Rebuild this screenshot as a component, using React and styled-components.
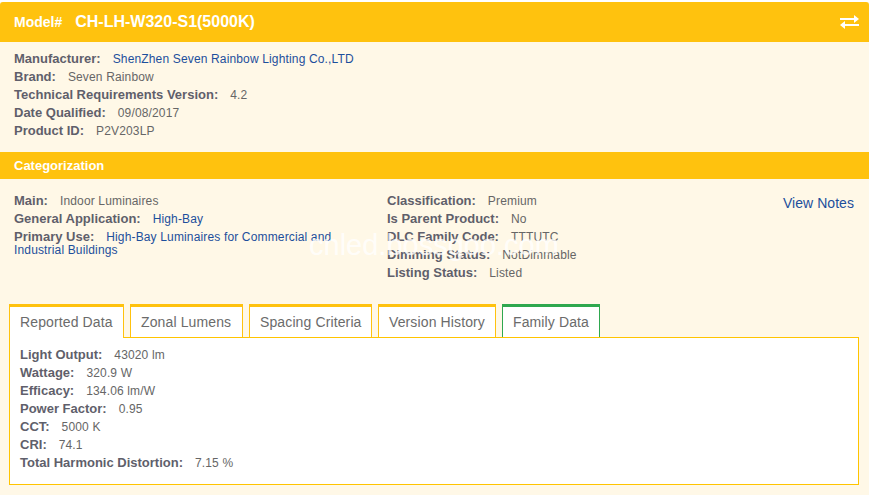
import React from "react";
import styled, { createGlobalStyle } from "styled-components";

const Global = createGlobalStyle`
  html, body { margin: 0; padding: 0; background: #fff; }
  body { font-family: "Liberation Sans", Arial, sans-serif; }
`;

const Page = styled.div`
  position: relative;
  width: 869px;
  height: 495px;
  padding-top: 2px;
  box-sizing: border-box;
  overflow: hidden;
  background: #fff;
`;

const Card = styled.div`
  height: 493px;
  background: #fff8e7;
  display: flex;
  flex-direction: column;
`;

const ModelBar = styled.div`
  height: 40px;
  flex: none;
  background: #ffc20e;
  border-radius: 3px 3px 0 0;
  display: flex;
  align-items: center;
  padding: 0 10px 0 14px;
  color: #fff;
  font-weight: bold;
`;

const ModelLabel = styled.span`
  font-size: 14px;
  margin-right: 13px;
`;

const ModelName = styled.span`
  font-size: 16px;
  flex: 1;
`;

const Info = styled.div`
  height: 110px;
  flex: none;
  box-sizing: border-box;
  padding: 8px 14px 0;
`;

const Row = styled.div`
  font-size: 12px;
  height: 18px;
  line-height: 18px;
  color: #666;
  letter-spacing: 0.15px;
`;

const Label = styled.b`
  font-size: 13px;
  line-height: 1;
  letter-spacing: 0;
  color: #5f5f6b;
  margin-right: 12px;
`;

const Value = styled.span`
  color: ${(p) => (p.$link ? "#1d4f9c" : "#666")};
`;

const SectionBar = styled.div`
  height: 27px;
  flex: none;
  box-sizing: border-box;
  background: #ffc20e;
  color: #fff;
  font-size: 13px;
  font-weight: bold;
  line-height: 27px;
  padding-left: 14px;
`;

const Cats = styled.div`
  height: 125px;
  flex: none;
  box-sizing: border-box;
  padding: 13px 15px 0 14px;
  display: grid;
  grid-template-columns: 373px 1fr auto;
`;

const WrapRow = styled(Row)`
  height: auto;
  line-height: 13px;
  padding-top: 2px;
  width: 330px;
`;

const ViewNotes = styled.a`
  font-size: 14px;
  line-height: 22px;
  letter-spacing: 0.05px;
  color: #1d4f9c;
`;

const Watermark = styled.div`
  position: absolute;
  left: 309px;
  top: 227px;
  font-size: 29px;
  line-height: 36px;
  color: rgba(255, 255, 255, 0.8);
  white-space: nowrap;
`;

const TabsWrap = styled.div`
  margin: 0 10px 0 9px;
`;

const TabList = styled.div`
  display: flex;
  gap: 6px;
  height: 33px;
`;

const Tab = styled.div`
  box-sizing: border-box;
  width: ${(p) => p.$w}px;
  height: ${(p) => (p.$active ? "34px" : "33px")};
  padding-left: 10px;
  background: #fff;
  border: 1px solid ${(p) => p.$color};
  border-top-width: 3px;
  border-bottom: none;
  font-size: 14px;
  line-height: 30px;
  letter-spacing: 0.12px;
  white-space: nowrap;
  color: #6b6b6b;
  position: ${(p) => (p.$active ? "relative" : "static")};
  z-index: ${(p) => (p.$active ? 1 : "auto")};
`;

const Panel = styled.div`
  box-sizing: border-box;
  height: 148px;
  background: #fff;
  border: 1px solid #ffc400;
  padding: 8px 10px;
`;

const fields1 = [
  ["Manufacturer:", "ShenZhen Seven Rainbow Lighting Co.,LTD", true],
  ["Brand:", "Seven Rainbow"],
  ["Technical Requirements Version:", "4.2"],
  ["Date Qualified:", "09/08/2017"],
  ["Product ID:", "P2V203LP"],
];
const cat2 = [
  ["Classification:", "Premium"],
  ["Is Parent Product:", "No"],
  ["DLC Family Code:", "TTTUTC"],
  ["Dimming Status:", "NotDimmable"],
  ["Listing Status:", "Listed"],
];
const data = [
  ["Light Output:", "43020 lm"],
  ["Wattage:", "320.9 W"],
  ["Efficacy:", "134.06 lm/W"],
  ["Power Factor:", "0.95"],
  ["CCT:", "5000 K"],
  ["CRI:", "74.1"],
  ["Total Harmonic Distortion:", "7.15 %"],
];
const tabs = [
  ["Reported Data", "#ffc20e", 115, true],
  ["Zonal Lumens", "#ffc20e", 113],
  ["Spacing Criteria", "#ffc20e", 123],
  ["Version History", "#ffc20e", 118],
  ["Family Data", "#2fa84f", 98],
];

const Field = ({ f }) => (
  <Row>
    <Label>{f[0]}</Label>
    <Value $link={f[2]}>{f[1]}</Value>
  </Row>
);

const SwapIcon = () => (
  <svg width="19" height="14" viewBox="0 0 19 14" fill="#fff">
    <path d="M0 3h14V0l5 4-5 4V5H0z" />
    <path d="M19 9H5V6l-5 4 5 4v-3h14z" />
  </svg>
);

export default function App() {
  return (
    <Page>
      <Global />
      <Card>
        <ModelBar>
          <ModelLabel>Model#</ModelLabel>
          <ModelName>CH-LH-W320-S1(5000K)</ModelName>
          <SwapIcon />
        </ModelBar>
        <Info>
          {fields1.map((f) => <Field key={f[0]} f={f} />)}
        </Info>
        <SectionBar>Categorization</SectionBar>
        <Cats>
          <div>
            <Field f={["Main:", "Indoor Luminaires"]} />
            <Field f={["General Application:", "High-Bay", true]} />
            <WrapRow>
              <Label>Primary Use:</Label>
              <Value $link>High-Bay Luminaires for Commercial and Industrial Buildings</Value>
            </WrapRow>
          </div>
          <div>
            {cat2.map((f) => <Field key={f[0]} f={f} />)}
          </div>
          <ViewNotes>View Notes</ViewNotes>
        </Cats>
        <TabsWrap>
          <TabList>
            {tabs.map((t) => (
              <Tab key={t[0]} $color={t[1]} $w={t[2]} $active={t[3]}>{t[0]}</Tab>
            ))}
          </TabList>
          <Panel>
            {data.map((f) => <Field key={f[0]} f={f} />)}
          </Panel>
        </TabsWrap>
      </Card>
      <Watermark>cnled.bossgoo.com</Watermark>
    </Page>
  );
}
